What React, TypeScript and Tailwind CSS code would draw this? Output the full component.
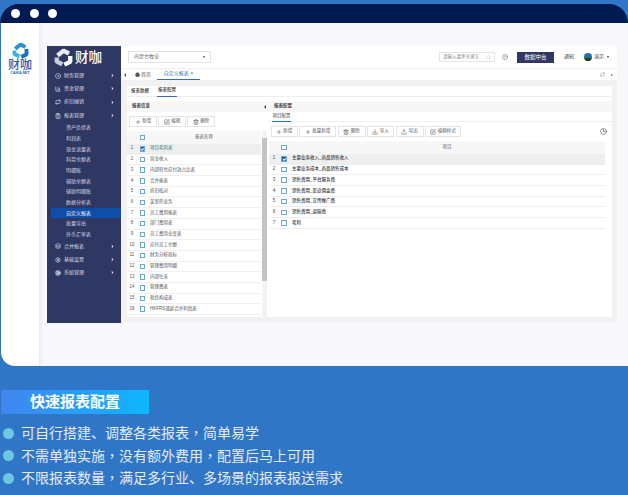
import React from "react";
import {
  BarChart3,
  ChevronRight,
  CircleDot,
  ClipboardList,
  Cog,
  Download,
  House,
  Layers,
  Plus,
  RefreshCw,
  Repeat,
  Search,
  Settings,
  SquarePen,
  Trash2,
  Upload,
  CircleHelp,
  Clock3,
} from "lucide-react";

const cjk = "font-['Liberation_Sans','Noto_Sans_CJK_SC',sans-serif]";

const leftRows = [
  "项目毛利表",
  "营业收入",
  "内部转也应付款占比表",
  "合并报表",
  "折旧核对",
  "英里药业务",
  "员工费用报表",
  "部门费用表",
  "员工费用业度表",
  "应付员工余额",
  "财务分析指标",
  "管理费用明细",
  "内部往来",
  "管理费表",
  "税负构成表",
  "HKFRS递延合并利润表",
];

const rightRows = [
  "主要业务收入_商品销售收入",
  "主要业务成本_商品销售成本",
  "销售费用_平台服务费",
  "销售费用_渠道佣金费",
  "销售费用_宣传推广费",
  "销售费用_运输费",
  "毛利",
];

const subMenu = [
  "资产负债表",
  "利润表",
  "现金流量表",
  "科目余额表",
  "明细账",
  "辅助余额表",
  "辅助明细账",
  "数据分析表",
  "自定义报表",
  "批量导出",
  "外币汇率表",
];

const points = [
  ["可自行搭建、调整各类报表", "简单易学"],
  ["不需单独实施", "没有额外费用", "配置后马上可用"],
  ["不限报表数量", "满足多行业、多场景的报表报送需求"],
];

// pinwheel hexagon used by both logos
const Ring: React.FC<{ size: number; a: string; b: string; c: string }> = ({ size, a, b, c }) => (
  <svg width={size} height={size} viewBox="0 0 24 24" fill="none" strokeWidth="5.5" strokeLinejoin="bevel">
    <path d="M4.5 9.5 12 3.5l7 3.5" stroke={a} />
    <path d="M20.5 10v7.5L13 21" stroke={b} />
    <path d="M10.5 20.5 3.5 17v-5" stroke={c} />
  </svg>
);

const Check: React.FC<{ on?: boolean }> = ({ on }) => (
  <span
    className={`flex h-[5.5px] w-[5.5px] items-center justify-center border-[0.7px] border-[#6aa9cf] ${
      on ? "bg-[#1b5fb4]" : "bg-white"
    }`}
  >
    {on && <span className="h-[2px] w-[3px] -rotate-45 border-b-[0.7px] border-l-[0.7px] border-white" />}
  </span>
);

const ToolBtn: React.FC<{ icon: React.ReactNode; label: string; w: string }> = ({ icon, label, w }) => (
  <button
    type="button"
    className={`flex h-[11px] items-center justify-center gap-[1.5px] border-[0.5px] border-[#e4e4e4] bg-white text-[4.5px] text-[#555] ${w}`}
  >
    {icon}
    {label}
  </button>
);

const MenuItem: React.FC<{ icon: React.ReactNode; label: string }> = ({ icon, label }) => (
  <div className="flex h-[13.3px] items-center pr-[6px] pl-[8px] text-[5px] text-[#d7dbe8]">
    <span className="w-[6px] text-white">{icon}</span>
    <span className="ml-[3px]">{label}</span>
    <ChevronRight size={5} className="ml-auto fill-white text-white" />
  </div>
);

const Sidebar: React.FC = () => (
  <aside className="flex w-[74px] shrink-0 flex-col bg-[#2f3862]">
    <div className="flex h-[23px] items-center gap-[2px] pl-[7px]">
      <Ring size={19} a="#e8eaf2" b="#ffffff" c="#c9cede" />
      <span className="text-[13.5px] leading-none font-medium text-white">财咖</span>
    </div>
    <MenuItem icon={<CircleDot size={6} />} label="财务管理" />
    <MenuItem icon={<BarChart3 size={6} />} label="资金管理" />
    <MenuItem icon={<Repeat size={6} />} label="折旧摊销" />
    <MenuItem icon={<ClipboardList size={6} />} label="报表管理" />
    <div className="flex flex-col">
      {subMenu.map((m) => (
        <div
          key={m}
          className={`ml-[4px] h-[10.7px] pl-[15px] text-[5px] leading-[10.7px] text-[#cdd2e2] ${
            m === "自定义报表" ? "bg-[#0e4ea6] text-white" : ""
          }`}
        >
          {m}
        </div>
      ))}
    </div>
    <MenuItem icon={<Layers size={6} />} label="合并报表" />
    <MenuItem icon={<Settings size={6} />} label="基础设置" />
    <MenuItem icon={<Cog size={6} />} label="系统管理" />
  </aside>
);

const TopBar: React.FC = () => (
  <div className="flex h-[23px] items-center border-b-[0.5px] border-[#eee] bg-white pr-[8px] pl-[7px]">
    <div className="flex h-[12px] w-[83px] items-center justify-between border-[0.5px] border-[#e2e2e2] px-[5px] text-[5px] text-[#666]">
      内蒙古牧业
      <span className="h-0 w-0 border-x-[1.5px] border-t-[2px] border-x-transparent border-t-[#444]" />
    </div>
    <div className="ml-auto flex h-[10px] w-[56px] items-center justify-between border-[0.5px] border-[#e6e6e6] px-[3px] text-[4.5px] text-[#888]">
      请输入菜单关键字
      <Search size={5} className="text-[#bbb]" />
    </div>
    <CircleHelp size={6} className="ml-[7px] text-[#666]" />
    <button
      type="button"
      className="ml-[9px] h-[11px] w-[37px] bg-[#2f3862] text-[5.5px] leading-[11px] text-white"
    >
      数据中台
    </button>
    <span className="ml-[10px] text-[5px] text-[#444]">通知</span>
    <span className="ml-[10px] h-[8px] w-[8px] rounded-full bg-[linear-gradient(180deg,#1e6fc0_45%,#1e7a4a_55%,#111_100%)]" />
    <span className="ml-[2px] text-[5px] text-[#444]">演示</span>
    <span className="ml-[3px] h-0 w-0 border-x-[1.5px] border-t-[2px] border-x-transparent border-t-[#333]" />
  </div>
);

const TabBar: React.FC = () => (
  <div className="flex h-[11px] items-center bg-white pr-[4px] pl-[3px] text-[5px]">
    <span className="h-0 w-0 border-y-[2px] border-r-[2.5px] border-y-transparent border-r-[#555]" />
    <span className="ml-[9px] flex w-[22px] items-center gap-[1px] text-[#555]">
      <House size={5} className="fill-[#555]" />
      首页
    </span>
    <span className="flex h-[11px] w-[43px] items-center justify-center border-b-[0.7px] border-[#2f6fbd] text-[#2f6fbd]">
      自定义报表 ×
    </span>
    <RefreshCw size={5} className="ml-auto text-[#888]" />
    <span className="ml-[6px] h-0 w-0 border-y-[1.5px] border-l-[2.5px] border-y-transparent border-l-[#666]" />
  </div>
);

const LeftPanel: React.FC = () => (
  <div className="flex w-[141px] shrink-0 flex-col">
    <div className="flex h-[11px] items-center justify-between bg-[#f7f7f7] pr-[2px] pl-[5px] text-[4.5px] font-bold text-[#444]">
      报表信息
      <span className="h-0 w-0 border-y-[2px] border-r-[2.5px] border-y-transparent border-r-[#444]" />
    </div>
    <div className="flex h-[19px] items-center gap-[1px] pl-[2px]">
      <ToolBtn icon={<Plus size={6} />} label="新增" w="w-[28px]" />
      <ToolBtn icon={<SquarePen size={6} />} label="编辑" w="w-[28px]" />
      <ToolBtn icon={<Trash2 size={6} />} label="删除" w="w-[28px]" />
    </div>
    <div className="flex min-h-0 flex-1">
      <div className="flex w-[134px] flex-col">
        <div className="flex h-[13px] items-center bg-[#f7f7f7] text-[4.5px] text-[#666]">
          <span className="w-[10px]" />
          <span className="flex w-[10px] justify-center pl-[1px]">
            <Check />
          </span>
          <span className="flex-1 text-center">报表名称</span>
        </div>
        {leftRows.map((r, i) => (
          <div
            key={r}
            className={`flex h-[10.7px] shrink-0 items-center border-b-[0.5px] border-[#f0f0f0] text-[#555] ${
              i === 0 ? "bg-[#eeeeee]" : ""
            }`}
          >
            <span className="w-[10px] text-center text-[4.5px]">{i + 1}</span>
            <span className="flex w-[10px] justify-center pl-[1px]">
              <Check on={i === 0} />
            </span>
            <span className={`ml-[3px] text-[4.5px] ${i === 0 ? "text-[#2b7f78]" : ""}`}>{r}</span>
          </div>
        ))}
      </div>
      <div className="ml-[1px] flex w-[5px] flex-col bg-[#f3f3f3]">
        <div className="mt-[7px] h-[143px] bg-[#c4c4c4]" />
      </div>
    </div>
  </div>
);

const RightPanel: React.FC = () => (
  <div className="flex min-w-0 flex-1 flex-col pl-[1px]">
    <div className="flex h-[11px] items-center bg-[#f7f7f7] pl-[5px] text-[4.5px] font-bold text-[#444]">报表配置</div>
    <div className="flex h-[10px] items-center border-b-[0.5px] border-[#eee] pl-[3px]">
      <span className="flex h-[10px] w-[19px] items-center justify-center border-b-[0.7px] border-[#2f6fbd] text-[4.5px] whitespace-nowrap text-[#444]">
        项目配置
      </span>
    </div>
    <div className="flex h-[19px] items-center gap-[1.5px] pr-[5px] pl-[1.5px]">
      <ToolBtn icon={<Plus size={6} />} label="新增" w="w-[27px]" />
      <ToolBtn icon={<Plus size={6} />} label="批量新增" w="w-[37px]" />
      <ToolBtn icon={<Trash2 size={6} />} label="删除" w="w-[28px]" />
      <ToolBtn icon={<Download size={6} />} label="导入" w="w-[27px]" />
      <ToolBtn icon={<Upload size={6} />} label="导出" w="w-[28px]" />
      <ToolBtn icon={<SquarePen size={6} />} label="编辑样式" w="w-[36px]" />
      <Clock3 size={7} className="ml-auto text-[#444]" />
    </div>
    <div className="mr-[7px] flex flex-col">
      <div className="flex h-[13px] items-center bg-[#f7f7f7] text-[4.5px] text-[#666]">
        <span className="w-[10px]" />
        <span className="flex w-[10px] justify-center">
          <Check />
        </span>
        <span className="flex-1 text-center">项目</span>
      </div>
      {rightRows.map((r, i) => (
        <div
          key={r}
          className={`flex h-[10.7px] shrink-0 items-center border-b-[0.5px] border-[#eeeeee] text-[#444] ${
            i === 0 ? "bg-[#eeeeee]" : ""
          }`}
        >
          <span className="w-[10px] text-center text-[4.5px]">{i + 1}</span>
          <span className="flex w-[10px] justify-center">
            <Check on={i === 0} />
          </span>
          <span className="ml-[3px] text-[4.5px] font-medium">{r}</span>
        </div>
      ))}
    </div>
  </div>
);

const AppShot: React.FC = () => (
  <div className="flex h-[277px] w-[570px] overflow-hidden">
    <Sidebar />
    <div className="flex min-w-0 flex-1 flex-col">
      <TopBar />
      <TabBar />
      <div className="flex min-h-0 flex-1 flex-col bg-[#f1f1f1] pt-[6px] pr-[5px] pb-[6px] pl-[6px]">
        <div className="flex min-h-0 flex-1 flex-col bg-white">
          <div className="flex h-[11px] shrink-0 items-center gap-[8px] border-b-[0.5px] border-[#eee] pl-[4px] text-[4.5px] font-medium text-[#444]">
            <span>报表数据</span>
            <span className="flex h-[11px] w-[20px] items-center justify-center border-b-[0.7px] border-[#2f6fbd]">
              报表配置
            </span>
          </div>
          <div className="flex min-h-0 flex-1 pt-[4px]">
            <LeftPanel />
            <RightPanel />
          </div>
        </div>
      </div>
    </div>
  </div>
);

export default function App() {
  return (
    <div className={`h-[495px] w-[628px] overflow-hidden bg-[#3076c6] pt-[4px] ${cjk}`}>
      <div className="flex h-[19px] items-center gap-[9.5px] rounded-t-[20px] bg-[#001a52] pl-[11px]">
        <span className="h-[9px] w-[9px] rounded-full bg-white" />
        <span className="h-[9px] w-[9px] rounded-full bg-white" />
        <span className="h-[9px] w-[9px] rounded-full bg-white" />
      </div>
      <div className="ml-[1px] flex h-[343px] overflow-hidden rounded-bl-[14px]">
        <div className="z-10 flex w-[38px] shrink-0 flex-col items-center bg-white pt-[19px] shadow-[2px_0_4px_rgba(0,0,0,0.06)]">
          <Ring size={17} a="#2a8fd8" b="#1c6fc0" c="#35b4e8" />
          <span className="mt-[1px] text-[12px] leading-[11px] font-medium text-[#1f5fae]">财咖</span>
          <span className="text-[3.5px] leading-[4px] font-bold text-[#1f5fae]">CAIKA.NET</span>
        </div>
        <div className="flex-1 bg-[#f8f8fc] pt-[23px] pl-[8px]">
          <AppShot />
        </div>
      </div>
      <div className="mt-[24px] ml-[1px] flex h-[24px] w-[148px] items-center justify-center bg-[linear-gradient(90deg,#4285ee,#0fb6ff)] text-[15px] font-bold text-white">
        快速报表配置
      </div>
      <ul className="mt-[8px] flex flex-col pl-[3px]">
        {points.map((parts) => (
          <li key={parts[0]} className="flex h-[22.5px] items-center gap-[7px] text-[14px] text-[#e3ecf8]">
            <span className="h-[11px] w-[11px] rounded-full bg-[#6cc7e0]" />
            <span>
              {parts.map((t, i) => (
                <React.Fragment key={t}>
                  {i > 0 && <span className="font-['Noto_Sans_CJK_TC',sans-serif]">，</span>}
                  {t}
                </React.Fragment>
              ))}
            </span>
          </li>
        ))}
      </ul>
    </div>
  );
}
